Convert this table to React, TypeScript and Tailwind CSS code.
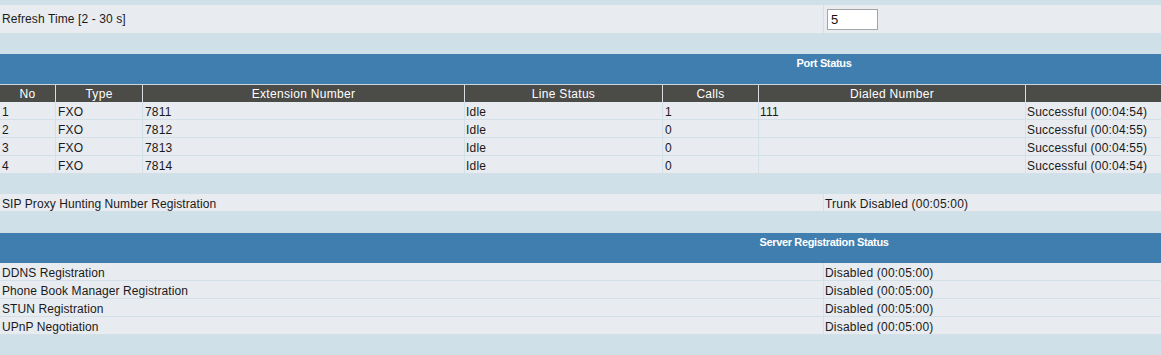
import React from "react";

const portCols = "grid grid-cols-[55px_87px_322px_198px_96px_267px_1fr]";

const ports = [
  { no: "1", type: "FXO", ext: "7811", line: "Idle", calls: "1", dialed: "111", reg: "Successful (00:04:54)" },
  { no: "2", type: "FXO", ext: "7812", line: "Idle", calls: "0", dialed: "", reg: "Successful (00:04:55)" },
  { no: "3", type: "FXO", ext: "7813", line: "Idle", calls: "0", dialed: "", reg: "Successful (00:04:55)" },
  { no: "4", type: "FXO", ext: "7814", line: "Idle", calls: "0", dialed: "", reg: "Successful (00:04:54)" },
];

const servers = [
  ["DDNS Registration", "Disabled (00:05:00)"],
  ["Phone Book Manager Registration", "Disabled (00:05:00)"],
  ["STUN Registration", "Disabled (00:05:00)"],
  ["UPnP Negotiation", "Disabled (00:05:00)"],
];

function SectionTitle({ title }: { title: string }) {
  return (
    <div className="h-[30px] bg-[#3f7eae] pl-[487px] pt-[2px] text-center text-[11px] leading-[14px] font-bold tracking-[-0.35px] text-white">
      {title}
    </div>
  );
}

function KeyValueRow({ label, value }: { label: string; value: string }) {
  return (
    <div className="grid h-[18px] grid-cols-[823px_1fr] border-b border-[#d4e0e8] bg-[#e8ebef] text-[12px] leading-[20px] text-[#1a1a1a]">
      <div className="pl-[2px] tracking-[0.08px]">{label}</div>
      <div className="border-l border-[#d4e0e8] pl-[1px] tracking-[0.2px]">{value}</div>
    </div>
  );
}

export default function App() {
  return (
    <div
      className="w-[1161px] h-[355px] bg-[#d0e0e8] pt-[5px]"
      style={{ fontFamily: '"Liberation Sans", Arial, sans-serif' }}
    >
      {/* refresh interval */}
      <div className="grid h-[28px] grid-cols-[823px_1fr] bg-[#e8ebef] text-[12px] tracking-[0.1px] text-[#1a1a1a]">
        <div className="flex items-center pl-[2px]">Refresh Time [2 - 30 s]</div>
        <div className="flex items-center border-l border-[#d4e0e8] pl-[3px]">
          <input
            defaultValue="5"
            className="h-[21px] w-[51px] border border-[#a5a5a5] bg-white px-[3px] text-[13px] text-[#111] outline-none"
            style={{ fontFamily: '"Liberation Sans", Arial, sans-serif' }}
          />
        </div>
      </div>

      <div className="h-[21px]" />

      {/* port status */}
      <SectionTitle title="Port Status" />
      <div className="h-px bg-[#c9d6df]" />
      <div className={`${portCols} h-[17px] bg-[#4b4b47] text-center text-[12px] leading-[18px] tracking-[0.3px] text-white`}>
        <div>No</div>
        <div className="border-l border-[#d8dde2]">Type</div>
        <div className="border-l border-[#d8dde2]">Extension Number</div>
        <div className="border-l border-[#d8dde2]">Line Status</div>
        <div className="border-l border-[#d8dde2]">Calls</div>
        <div className="border-l border-[#d8dde2]">Dialed Number</div>
        <div className="border-l border-[#d8dde2]"></div>
      </div>
      {ports.map((p) => (
        <div
          key={p.no}
          className={`${portCols} h-[18px] border-b border-[#d4e0e8] bg-[#e8ebef] text-[12px] leading-[20px] tracking-[0.2px] text-[#1a1a1a]`}
        >
          <div className="pl-[2px]">{p.no}</div>
          <div className="border-l border-[#d4e0e8] pl-[2px]">{p.type}</div>
          <div className="border-l border-[#d4e0e8] pl-[2px]">{p.ext}</div>
          <div className="border-l border-[#d4e0e8] pl-[1px]">{p.line}</div>
          <div className="border-l border-[#d4e0e8] pl-[2px]">{p.calls}</div>
          <div className="border-l border-[#d4e0e8] pl-[1px]">{p.dialed}</div>
          <div className="border-l border-[#d4e0e8] pl-[1px]">{p.reg}</div>
        </div>
      ))}

      <div className="h-[20px]" />

      <KeyValueRow label="SIP Proxy Hunting Number Registration" value="Trunk Disabled (00:05:00)" />

      <div className="h-[21px]" />

      {/* server registration */}
      <SectionTitle title="Server Registration Status" />
      {servers.map(([label, value]) => (
        <KeyValueRow key={label} label={label} value={value} />
      ))}
    </div>
  );
}
